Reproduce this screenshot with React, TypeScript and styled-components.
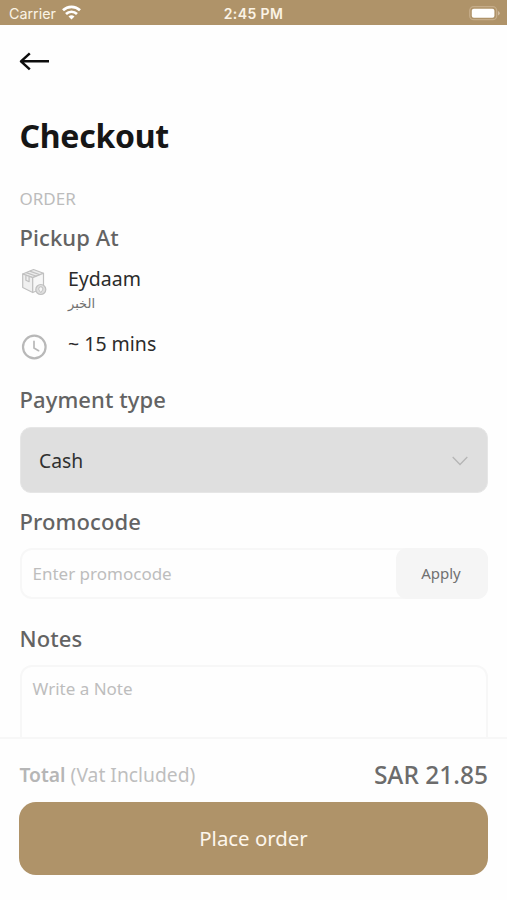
import React from "react";
import styled, { createGlobalStyle } from "styled-components";

const GlobalStyle = createGlobalStyle`
  * { box-sizing: border-box; }
  html, body { margin: 0; padding: 0; background: #fefefe; }
  body { font-family: "Noto Sans", "Open Sans", sans-serif; }
  button, input, textarea { font-family: inherit; margin: 0; }
  h1, h2, p { margin: 0; }
`;

const brand = "#af9369";

const Screen = styled.div`
  width: 507px;
  height: 900px;
  display: flex;
  flex-direction: column;
  overflow: hidden;
  background: #fefefe;
`;

const StatusBar = styled.header`
  flex: none;
  height: 25px;
  padding: 2px 7px 0 9px;
  display: grid;
  grid-template-columns: 1fr auto 1fr;
  align-items: center;
  background: ${brand};
  color: #fbf3e6;
  font-family: Inter, "Liberation Sans", sans-serif;
  font-size: 14.3px;
  line-height: 22px;
`;

const Carrier = styled.div`
  display: flex;
  align-items: center;
  gap: 6px;
  svg { margin-top: -2px; }
`;

const Clock = styled.div`
  margin-right: 2px;
  font-weight: 600;
  font-size: 14px;
  letter-spacing: 0.4px;
`;

const Battery = styled.div`
  display: flex;
  justify-content: flex-end;
`;

const Content = styled.main`
  flex: 1;
  min-height: 0;
  overflow: hidden;
  padding: 0 19px 0 19.5px;
`;

const BackButton = styled.button`
  display: block;
  margin: 24px 0 0 -2px;
  padding: 0;
  border: 0;
  background: none;
  height: 24px;
`;

const Title = styled.h1`
  margin-top: 41px;
  font-size: 32px;
  line-height: 44px;
  font-weight: 700;
  letter-spacing: -0.25px;
  color: #161616;
`;

const Overline = styled.p`
  margin-top: 29px;
  font-size: 17px;
  line-height: 24px;
  color: #bcbcbc;
`;

const Heading = styled.h2<{ $top: number }>`
  margin-top: ${(p) => p.$top}px;
  font-size: 22px;
  line-height: 30px;
  font-weight: 500;
  letter-spacing: 0.1px;
  color: #636363;
`;

const InfoRow = styled.div<{ $top: number }>`
  margin-top: ${(p) => p.$top}px;
  display: grid;
  grid-template-columns: 48.5px 1fr;
`;

const InfoIcon = styled.div<{ $top: number }>`
  padding-top: ${(p) => p.$top}px;
  svg { display: block; }
`;

const InfoText = styled.p`
  font-size: 19.5px;
  line-height: 28px;
  color: #2b2b2b;
`;

const Branch = styled.p`
  padding-top: 1px;
  font-family: "DejaVu Sans", sans-serif;
  font-size: 13px;
  line-height: 20px;
  color: #707070;
`;

const Select = styled.button`
  width: 100%;
  height: 66px;
  margin-top: 13px;
  padding: 0 19px 0 18.5px;
  border: 1px solid #e6e6e6;
  border-radius: 11px;
  display: flex;
  align-items: center;
  justify-content: space-between;
  background: #dfdfdf;
  color: #303030;
  font-size: 19.3px;
  svg { margin-top: 2px; }
`;

const PromoField = styled.div`
  height: 51px;
  margin-top: 12px;
  display: flex;
  border: 2px solid #f7f7f7;
  border-radius: 12px;
`;

const PromoInput = styled.input`
  flex: 1;
  min-width: 0;
  padding: 0 0 0 11px;
  border: 0;
  outline: 0;
  background: transparent;
  font-size: 17px;
  &::placeholder { color: #bdbdbd; opacity: 1; }
`;

const ApplyButton = styled.button`
  width: 92px;
  margin: -2px -2px -2px 0;
  padding: 0 2px 2px 0;
  border: 0;
  border-radius: 11px;
  background: #f5f5f5;
  color: #707070;
  font-size: 15px;
`;

const NoteField = styled.textarea`
  display: block;
  width: 100%;
  height: 120px;
  margin-top: 12px;
  padding: 10px 11px;
  border: 2px solid #f7f7f7;
  border-radius: 12px;
  outline: 0;
  resize: none;
  background: transparent;
  font-size: 17px;
  line-height: 24px;
  &::placeholder { color: #bdbdbd; opacity: 1; }
`;

const Footer = styled.footer`
  flex: none;
  height: 163px;
  padding: 19px 19px 0;
  border-top: 2px solid #f7f7f7;
  background: #fefefe;
`;

const TotalRow = styled.div`
  height: 44px;
  padding-left: 0.5px;
  display: flex;
  justify-content: space-between;
  align-items: flex-start;
  line-height: 34px;
`;

const TotalLabel = styled.p`
  font-size: 19.3px;
  line-height: 33px;
  color: #bebebe;
  strong { font-weight: 600; color: #b6b6b6; }
`;

const Amount = styled.p`
  font-size: 24.5px;
  font-weight: 500;
  color: #6c6c6c;
`;

const PlaceOrder = styled.button`
  display: block;
  width: 100%;
  height: 73px;
  padding: 0 0 2px;
  border: 0;
  border-radius: 17px;
  background: ${brand};
  color: #fdf6ec;
  font-size: 20.4px;
`;

const WifiIcon = () => (
  <svg width="19" height="15" viewBox="0 0 19 15" fill="none" stroke="#fff" strokeWidth="2.7">
    <path d="M1 5.300a12.200 12.200 0 0 1 17 0" />
    <path d="M4 9a7.900 7.900 0 0 1 11 0" />
    <path d="M9.500 14.600 6.500 11.600a4.300 4.300 0 0 1 6 0Z" fill="#fff" stroke="none" />
  </svg>
);

const BatteryIcon = () => (
  <svg width="31" height="15" viewBox="0 0 31 15">
    <rect x="0.7" y="0.7" width="27" height="13" rx="4" fill="none" stroke="#c5ac89" strokeWidth="1.3" />
    <rect x="2.8" y="2.7" width="22.6" height="9" rx="2" fill="#fff" />
    <path d="M29 5v4.500q1.800-.7 1.800-2.250T29 5Z" fill="#d2bea2" />
  </svg>
);

const ArrowIcon = () => (
  <svg width="32" height="24" viewBox="0 0 32 24" fill="none" stroke="#0c0c0c" strokeWidth="2.5">
    <path d="M31 12.300H3M11.800 4.300 3 12.300l8.800 8" strokeLinejoin="round" />
  </svg>
);

const PackageIcon = () => (
  <svg width="28" height="28" viewBox="0 0 28 28" fill="none" stroke="#c0c0c0" strokeWidth="1.200" strokeLinejoin="round">
    <path d="M2.700 6 13.500 1.500 23.500 5.300 12.700 9.600Z" fill="#ececec" />
    <path d="M2.700 6v13.500L12.700 24.500V9.600Z" fill="#f0f0f0" />
    <path d="M12.700 9.600 23.500 5.300V17l-7.800 6.300-3 1.200Z" fill="#f7f7f7" />
    <path d="M6.200 4.600 16.400 8.200M9.700 3.100 20 6.800M5.900 7.500v4.700l3.200 1.500V9" />
    <circle cx="20.800" cy="21.500" r="5" fill="#dedede" />
    <path d="M20.800 24.500c-1.300-1.700-2-2.600-2-3.700a2 2 0 0 1 4 0c0 1.100-.7 2-2 3.700Z" strokeWidth=".8" stroke="#b5b5b5" fill="#f6f6f6" />
  </svg>
);

const ClockIcon = () => (
  <svg width="28" height="28" viewBox="0 0 28 28" fill="none" stroke="#b8b8b8">
    <circle cx="14.300" cy="14" r="11.300" strokeWidth="2.200" />
    <path d="M14 8.300v6.700l4.600 2.700" strokeWidth="1.700" strokeLinecap="round" />
  </svg>
);

const ChevronIcon = () => (
  <svg width="16" height="10" viewBox="0 0 16 10" fill="none" stroke="#b5b5b5" strokeWidth="1.300">
    <path d="m.7 1 7.300 7.500L15.300 1" />
  </svg>
);

export default function App() {
  return (
    <>
      <GlobalStyle />
      <Screen>
        <StatusBar>
          <Carrier>Carrier <WifiIcon /></Carrier>
          <Clock>2:45 PM</Clock>
          <Battery><BatteryIcon /></Battery>
        </StatusBar>
        <Content>
          <BackButton aria-label="Back"><ArrowIcon /></BackButton>
          <Title>Checkout</Title>
          <Overline>ORDER</Overline>
          <Heading $top={11}>Pickup At</Heading>
          <InfoRow $top={13}>
            <InfoIcon $top={3}><PackageIcon /></InfoIcon>
            <div>
              <InfoText>Eydaam</InfoText>
              <Branch lang="ar">الخبر</Branch>
            </div>
          </InfoRow>
          <InfoRow $top={16}>
            <InfoIcon $top={3}><ClockIcon /></InfoIcon>
            <InfoText>~ 15 mins</InfoText>
          </InfoRow>
          <Heading $top={23}>Payment type</Heading>
          <Select>Cash <ChevronIcon /></Select>
          <Heading $top={13}>Promocode</Heading>
          <PromoField>
            <PromoInput placeholder="Enter promocode" />
            <ApplyButton>Apply</ApplyButton>
          </PromoField>
          <Heading $top={24}>Notes</Heading>
          <NoteField placeholder="Write a Note" />
        </Content>
        <Footer>
          <TotalRow>
            <TotalLabel><strong>Total</strong> (Vat Included)</TotalLabel>
            <Amount>SAR 21.85</Amount>
          </TotalRow>
          <PlaceOrder>Place order</PlaceOrder>
        </Footer>
      </Screen>
    </>
  );
}
